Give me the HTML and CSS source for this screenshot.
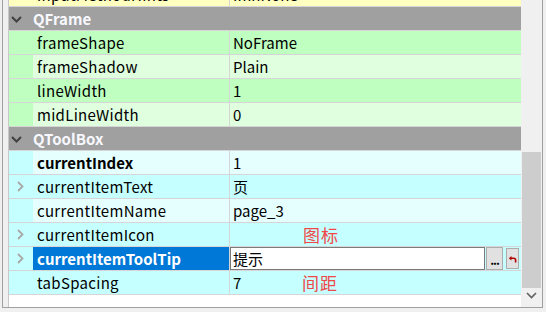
FILE: index.html
```html
<!DOCTYPE html>
<html>
<head>
<meta charset="utf-8">
<link rel="stylesheet" href="styles.css">
</head>
<body>
<div class="frame">
  <div class="view">
    <div class="tree">
      <div class="rows">
        <div class="row yellow">
          <div class="branch"><svg class="chev" width="7" height="11" viewBox="0 0 7 11"><polyline points="1,1 5.5,5.5 1,10"/></svg></div>
          <div class="name">inputMethodHints</div>
          <div class="value">ImhNone</div>
        </div>
        <div class="row header">
          <div class="branch"><svg class="down" width="11" height="7" viewBox="0 0 11 7"><polyline points="1,1 5.5,5.5 10,1"/></svg></div>
          <div class="title">QFrame</div>
        </div>
        <div class="row green">
          <div class="branch"></div>
          <div class="name">frameShape</div>
          <div class="value">NoFrame</div>
        </div>
        <div class="row green alt">
          <div class="branch"></div>
          <div class="name">frameShadow</div>
          <div class="value">Plain</div>
        </div>
        <div class="row green">
          <div class="branch"></div>
          <div class="name">lineWidth</div>
          <div class="value">1</div>
        </div>
        <div class="row green alt">
          <div class="branch"></div>
          <div class="name">midLineWidth</div>
          <div class="value">0</div>
        </div>
        <div class="row header">
          <div class="branch"><svg class="down" width="11" height="7" viewBox="0 0 11 7"><polyline points="1,1 5.5,5.5 10,1"/></svg></div>
          <div class="title">QToolBox</div>
        </div>
        <div class="row cyan alt">
          <div class="branch"></div>
          <div class="name bold">currentIndex</div>
          <div class="value">1</div>
        </div>
        <div class="row cyan">
          <div class="branch"><svg class="chev" width="7" height="11" viewBox="0 0 7 11"><polyline points="1,1 5.5,5.5 1,10"/></svg></div>
          <div class="name">currentItemText</div>
          <div class="value">页</div>
        </div>
        <div class="row cyan alt">
          <div class="branch"></div>
          <div class="name">currentItemName</div>
          <div class="value">page_3</div>
        </div>
        <div class="row cyan">
          <div class="branch"><svg class="chev" width="7" height="11" viewBox="0 0 7 11"><polyline points="1,1 5.5,5.5 1,10"/></svg></div>
          <div class="name">currentItemIcon</div>
          <div class="value"><span class="note">图标</span></div>
        </div>
        <div class="row cyan alt">
          <div class="branch"><svg class="chev" width="7" height="11" viewBox="0 0 7 11"><polyline points="1,1 5.5,5.5 1,10"/></svg></div>
          <div class="name bold selected">currentItemToolTip</div>
          <div class="editor">
            <div class="lineedit">提示</div>
            <div class="btn dots">...</div>
            <div class="btn reset"><svg width="9" height="8" viewBox="0 0 9 8"><path d="M3.5 1 L0.8 3.3 L3.5 5.6 Z" fill="#b00000"/><path d="M3 3.3 H5.6 Q7.6 3.3 7.6 5.2 V7.5" fill="none" stroke="#b00000" stroke-width="1.6"/></svg></div>
          </div>
        </div>
        <div class="row cyan">
          <div class="branch"></div>
          <div class="name">tabSpacing</div>
          <div class="value">7<span class="note note2">间距</span></div>
        </div>
      </div>
    </div>
    <div class="scrollbar">
      <div class="track"><div class="thumb"></div></div>
      <div class="arrow"><svg width="11" height="7" viewBox="0 0 11 7"><polyline points="1,1 5.5,5.5 10,1"/></svg></div>
    </div>
  </div>
</div>
</body>
</html>
```

FILE: styles.css
```css
html, body {
  margin: 0;
  padding: 0;
  background: #f0f0f0;
  width: 546px;
  height: 312px;
  overflow: hidden;
  font-family: "Noto Sans CJK SC", "Noto Sans", sans-serif;
  font-size: 15px;
  color: #000;
}

.frame {
  margin-left: 2px;
  width: 534px;
  height: 307px;
  border-left: 1px solid #a0a0a0;
  border-right: 1px solid #a0a0a0;
  border-bottom: 1px solid #a0a0a0;
  padding-left: 5px;
  box-sizing: content-box;
}

.view {
  display: flex;
  height: 307px;
}

.tree {
  width: 512px;
  border-left: 1px solid #c8c8c8;
  background: #fff;
  overflow: hidden;
  height: 307px;
}

.rows {
  margin-top: -17px;
}

.row {
  display: flex;
  height: 23px;
  border-bottom: 1px solid #d6d6d6;
  line-height: 23px;
  white-space: nowrap;
}

.branch {
  width: 24px;
  flex: none;
  position: relative;
}

.name {
  width: 192px;
  flex: none;
  padding-left: 4px;
  border-right: 1px solid #d6d6d6;
  overflow: hidden;
  letter-spacing: 0.3px;
}

.value {
  flex: 1;
  padding-left: 3px;
  position: relative;
}

.bold { font-weight: bold; letter-spacing: 0; }

.yellow { background: #ffffbf; }
.green { background: #bfffbf; }
.green.alt .name, .green.alt .value { background: #dfffdf; }
.cyan { background: #c6ffff; }
.cyan.alt .name, .cyan.alt .value { background: #e5ffff; }

.header {
  background: #a0a0a0;
}
.header .title {
  font-weight: bold;
  color: #f8f8ff;
}

.chev {
  position: absolute;
  left: 8px;
  top: 6px;
}
.chev polyline {
  fill: none;
  stroke: #a8a8a8;
  stroke-width: 1.8;
}
.down {
  position: absolute;
  left: 2px;
  top: 9px;
}
.down polyline {
  fill: none;
  stroke: #404040;
  stroke-width: 2;
}

.name.selected {
  background: #0078d7 !important;
  color: #fff;
}

.editor {
  flex: 1;
  display: flex;
  align-items: stretch;
}
.lineedit {
  width: 251px;
  border: 1px solid #7a7a7a;
  background: #fff;
  padding-left: 2px;
  line-height: 21px;
}
.btn {
  box-sizing: border-box;
  background: #e1e1e1;
  border: 1px solid #adadad;
}
.dots {
  width: 17px;
  margin-left: 1px;
  font-size: 12px;
  line-height: 12px;
  text-align: center;
  padding-top: 6px;
  font-weight: bold;
  letter-spacing: -1px;
}
.reset {
  width: 13px;
  margin-left: 3px;
  margin-top: 1px;
  margin-bottom: 1px;
  display: flex;
  align-items: center;
  justify-content: center;
}

.note {
  position: absolute;
  left: 73px;
  top: 0;
  color: #f04848;
  font-size: 17px;
  letter-spacing: 1px;
}
.note2 { left: 72px; }

.scrollbar {
  width: 21px;
  background: #f0f0f0;
  display: flex;
  flex-direction: column;
}
.track {
  flex: 1;
  padding-top: 152px;
}
.thumb {
  margin: 0 1px;
  height: 136px;
  background: #cdcdcd;
}
.arrow {
  height: 19px;
  display: flex;
  justify-content: center;
}
.arrow svg { margin-top: 4px; }
.arrow polyline {
  fill: none;
  stroke: #606060;
  stroke-width: 1.6;
}
```
